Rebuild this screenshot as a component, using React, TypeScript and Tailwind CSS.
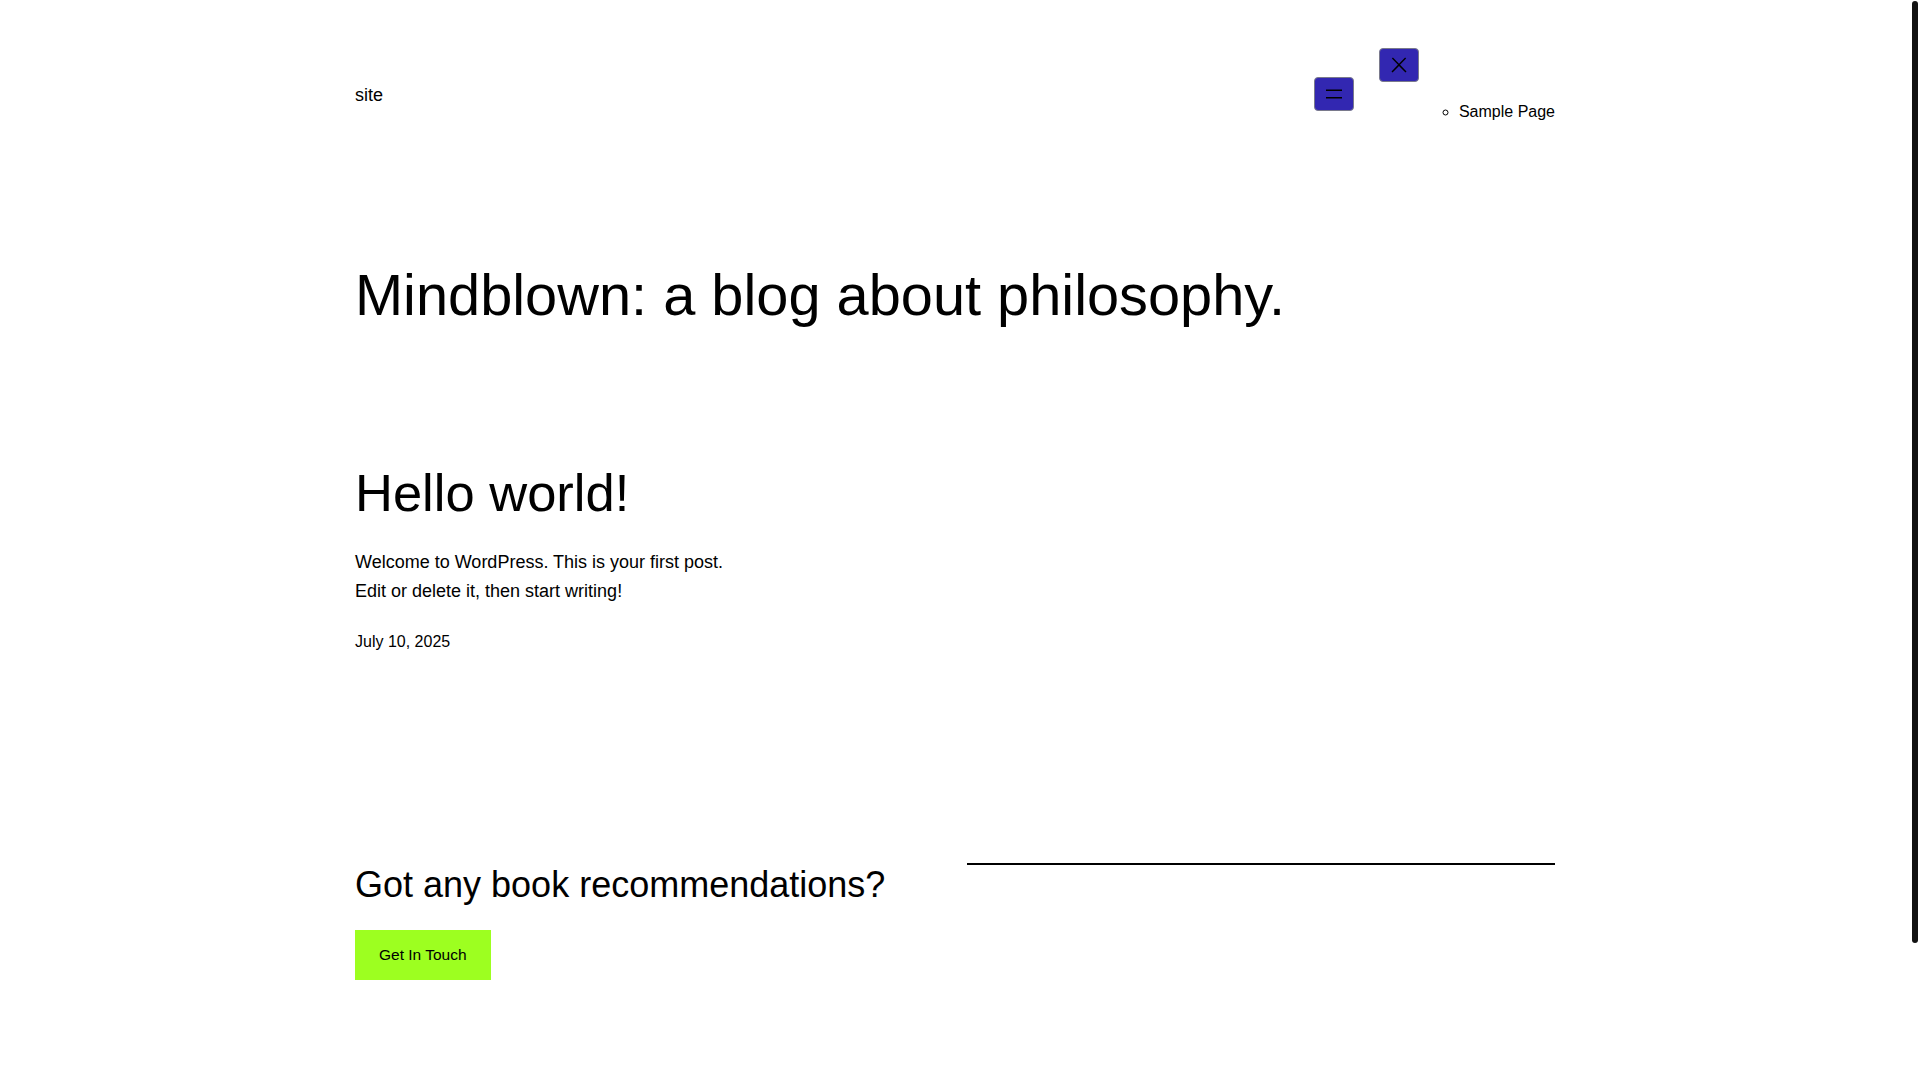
import React from 'react';

const MenuIcon = () => (
  <svg width="24" height="24" viewBox="0 0 24 24" fill="currentColor" aria-hidden="true">
    <rect x="4" y="7.5" width="16" height="1.5" />
    <rect x="4" y="15" width="16" height="1.5" />
  </svg>
);

const CloseIcon = () => (
  <svg width="24" height="24" viewBox="0 0 24 24" fill="currentColor" aria-hidden="true">
    <path d="M13 11.8l6.1-6.3-1-1-6.1 6.2-6.1-6.2-1 1 6.1 6.3-6.5 6.7 1 1 6.5-6.6 6.5 6.6 1-1z" />
  </svg>
);

const App: React.FC = () => {
  return (
    <div className="flex h-screen bg-white text-black font-['Liberation_Sans',Arial,sans-serif]">
      <main className="flex-1 overflow-hidden">
        <div className="max-w-[1200px] mx-auto pt-12 pb-[257px]">
          {/* Header */}
          <header className="flex items-center justify-between">
            <a className="mt-[2px] text-[18px] leading-[1.6]">site</a>
            <nav className="flex items-center gap-[25px]">
              <button className="w-[40px] h-[34px] flex items-center justify-center bg-[#3227b1] border border-[#7a7a8c] rounded-[4px] text-black">
                <MenuIcon />
              </button>
              <div className="flex flex-col items-start">
                <button className="w-[40px] h-[34px] flex items-center justify-center bg-[#3227b1] border border-[#7a7a8c] rounded-[4px] text-black">
                  <CloseIcon />
                </button>
                <ul className="ml-10 pl-10 mt-[17px] mb-4 list-[circle] text-[16px] leading-[1.6]">
                  <li>Sample Page</li>
                </ul>
              </div>
            </nav>
          </header>

          {/* Title */}
          <h1 className="mt-[120px] text-[57.75px] leading-[1.2] font-normal">
            Mindblown: a blog about philosophy.
          </h1>

          {/* Posts */}
          <div className="grid grid-cols-3 gap-6 mt-[131px]">
            <article>
              <h2 className="text-[52.5px] leading-[1.2] font-normal">Hello world!</h2>
              <p className="mt-[24px] text-[18px] leading-[1.6]">
                Welcome to WordPress. This is your first post. Edit or delete it, then start writing!
              </p>
              <div className="mt-[24px] text-[16px] leading-[1.6]">July 10, 2025</div>
            </article>
          </div>

          {/* Call to action */}
          <div className="grid grid-cols-2 gap-6 mt-[208px] items-start">
            <div>
              <h2 className="text-[36px] leading-[1.2] font-normal">Got any book recommendations?</h2>
              <a className="mt-[24px] inline-block bg-[#9dff20] px-[24px] py-[12px] text-[15.5px] leading-[26px]">
                Get In Touch
              </a>
            </div>
            <div>
              <hr className="border-0 border-t-2 border-black" />
            </div>
          </div>
        </div>
      </main>

      {/* Scrollbar */}
      <div className="w-[10px] shrink-0 py-[1px] flex justify-center">
        <div className="w-[6px] h-[942px] rounded-full bg-[#121212]" />
      </div>
    </div>
  );
};

export default App;
